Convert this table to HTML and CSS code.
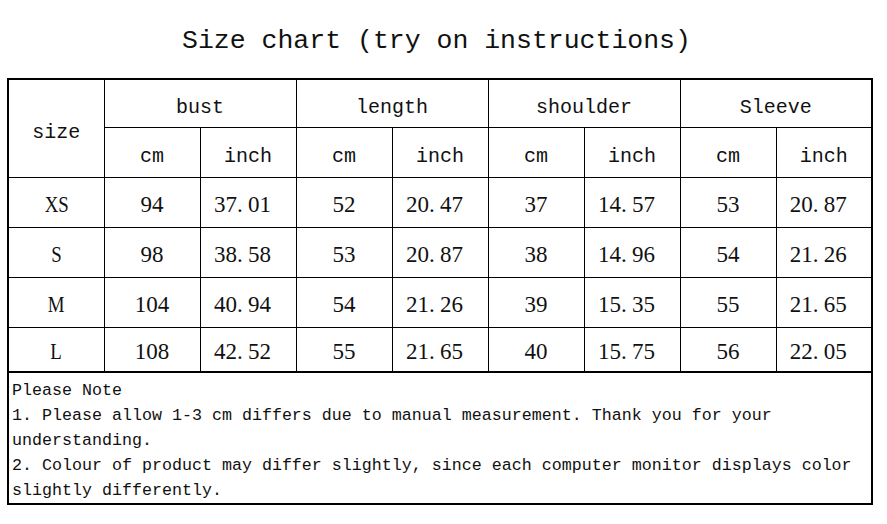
FILE: index.html
```html
<!DOCTYPE html>
<html>
<head>
<meta charset="utf-8">
<link rel="stylesheet" href="styles.css">
</head>
<body>
<h1 class="title">Size chart (try on instructions)</h1>
<table class="chart">
  <colgroup>
    <col class="c"><col class="c"><col class="c"><col class="c"><col class="c"><col class="c"><col class="c"><col class="c"><col class="c">
  </colgroup>
  <tr class="h1">
    <td rowspan="2" class="hd">size</td>
    <td colspan="2" class="hd">bust</td>
    <td colspan="2" class="hd">length</td>
    <td colspan="2" class="hd">shoulder</td>
    <td colspan="2" class="hd">Sleeve</td>
  </tr>
  <tr class="h2">
    <td class="hd">cm</td><td class="hd">inch</td><td class="hd">cm</td><td class="hd">inch</td><td class="hd">cm</td><td class="hd">inch</td><td class="hd">cm</td><td class="hd">inch</td>
  </tr>
  <tr class="r">
    <td><span class="sz">XS</span></td><td>94</td><td class="dec">37<span class="dot">.</span>01</td><td>52</td><td class="dec">20<span class="dot">.</span>47</td><td>37</td><td class="dec">14<span class="dot">.</span>57</td><td>53</td><td class="dec">20<span class="dot">.</span>87</td>
  </tr>
  <tr class="r">
    <td><span class="sz">S</span></td><td>98</td><td class="dec">38<span class="dot">.</span>58</td><td>53</td><td class="dec">20<span class="dot">.</span>87</td><td>38</td><td class="dec">14<span class="dot">.</span>96</td><td>54</td><td class="dec">21<span class="dot">.</span>26</td>
  </tr>
  <tr class="r">
    <td><span class="sz">M</span></td><td>104</td><td class="dec">40<span class="dot">.</span>94</td><td>54</td><td class="dec">21<span class="dot">.</span>26</td><td>39</td><td class="dec">15<span class="dot">.</span>35</td><td>55</td><td class="dec">21<span class="dot">.</span>65</td>
  </tr>
  <tr class="r last">
    <td><span class="sz">L</span></td><td>108</td><td class="dec">42<span class="dot">.</span>52</td><td>55</td><td class="dec">21<span class="dot">.</span>65</td><td>40</td><td class="dec">15<span class="dot">.</span>75</td><td>56</td><td class="dec">22<span class="dot">.</span>05</td>
  </tr>
  <tr class="notes">
    <td colspan="9">Please Note<br>1. Please allow 1-3 cm differs due to manual measurement. Thank you for your<br>understanding.<br>2. Colour of product may differ slightly, since each computer monitor displays color<br>slightly differently.</td>
  </tr>
</table>
</body>
</html>
```

FILE: styles.css
```css
html, body {
  margin: 0;
  padding: 0;
  background: #fff;
}
body {
  font-family: "Liberation Mono", "DejaVu Sans Mono", monospace;
  color: #111;
  width: 887px;
  height: 524px;
  overflow: hidden;
}
.title {
  margin: 0;
  height: 78px;
  line-height: 82px;
  padding-right: 14px;
  font-size: 26.5px;
  font-weight: normal;
  text-align: center;
}
.chart {
  margin-left: 7px;
  border-collapse: collapse;
  table-layout: fixed;
  width: 864px;
  border: 2px solid #000;
}
.chart .c {
  width: 96px;
}
.chart td {
  border: 1px solid #000;
  padding: 6px 0 0 0;
  text-align: center;
  vertical-align: middle;
  font-family: "Liberation Serif", "Times New Roman", serif;
  font-size: 23px;
  line-height: 26px;
}
.chart td.hd {
  font-family: "Liberation Mono", "DejaVu Sans Mono", monospace;
  font-size: 20px;
  padding-top: 10px;
}
.chart td.dec {
  padding-right: 11px;
}
.dot {
  display: inline-block;
  width: 11px;
  text-align: left;
}
.sz {
  display: inline-block;
  transform: scaleX(0.82);
}
.h1 { height: 48px; }
.h2 { height: 50px; }
.r { height: 50px; }
.r.last { height: 45px; }
.chart .notes td {
  text-align: left;
  vertical-align: top;
  font-family: "Liberation Mono", "DejaVu Sans Mono", monospace;
  font-size: 16.67px;
  line-height: 25px;
  padding: 5px 0 0 3px;
  height: 124px;
  border-top: 2px solid #000;
  border-bottom: 2px solid #000;
}
```
